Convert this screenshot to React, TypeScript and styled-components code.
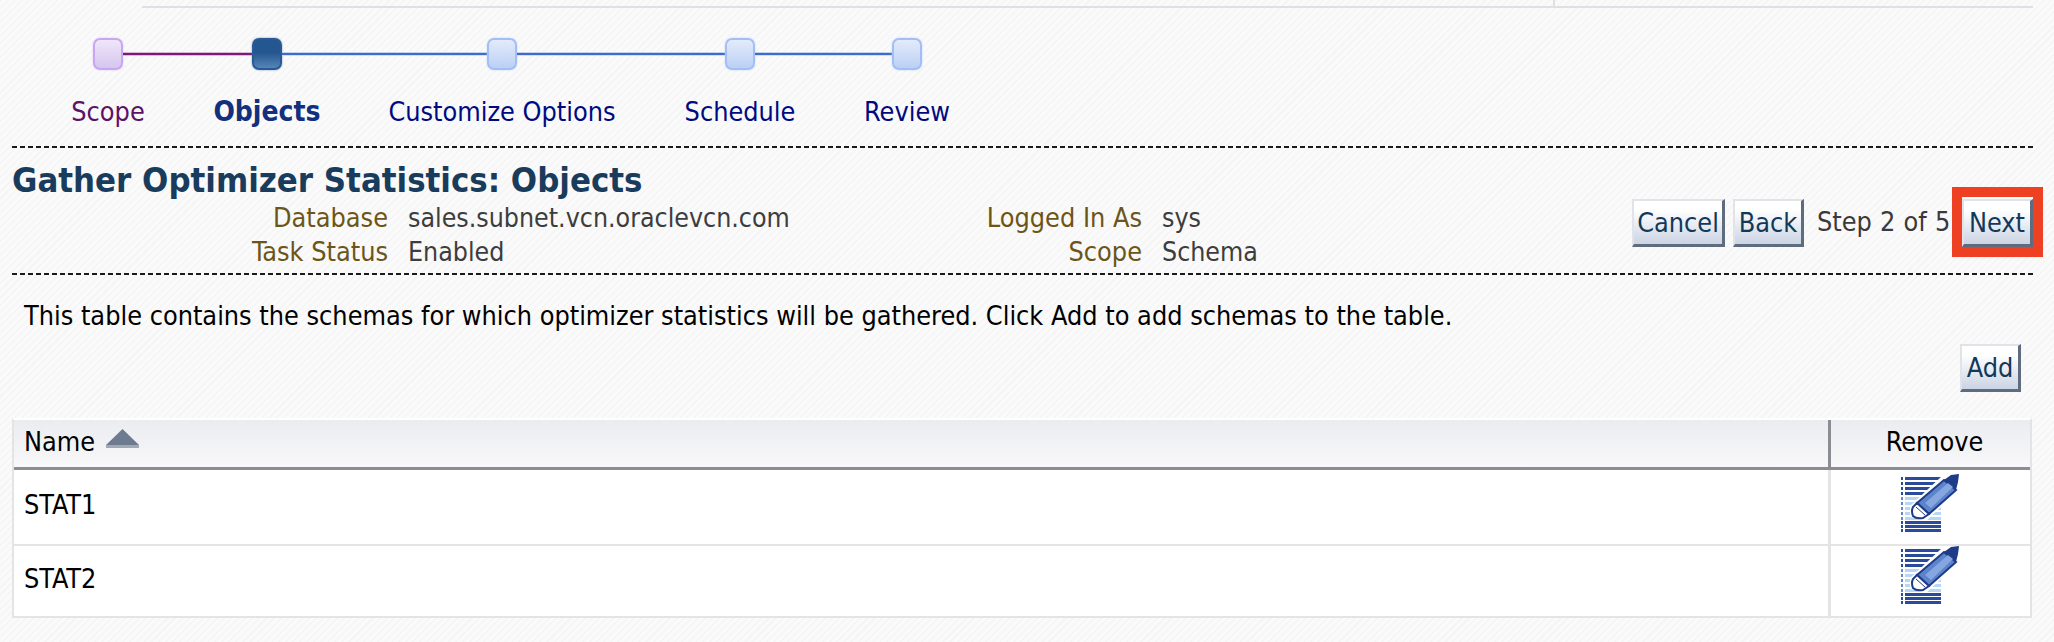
import React from "react";
import styled, { createGlobalStyle } from "styled-components";

const FONT = `"DejaVu Sans Condensed", "DejaVu Sans", sans-serif`;

const Global = createGlobalStyle`
  html, body {
    margin: 0;
    height: 642px;
    overflow: hidden;
    background-color: #f9f9f9;
    background-image: repeating-linear-gradient(
      135deg,
      #f5f5f5 0,
      #f5f5f5 1.5px,
      #fafafa 1.5px,
      #fafafa 5px
    );
  }
  * { box-sizing: border-box; }
`;

const S = {
  Page: styled.div`
    width: 2054px;
    height: 642px;
    padding: 0 21px 0 12px;
    font-family: ${FONT};
    font-size: 26.8px;
  `,
  TopRule: styled.div`
    height: 8px;
    margin-left: 130px;
    border-bottom: 2px solid #dde1e5;
  `,
  TopTick: styled.div`
    width: 2px;
    height: 6px;
    margin-left: 1411px;
    background: #dde1e5;
  `,
  Track: styled.div`
    display: flex;
    align-items: center;
    height: 32px;
    margin: 30px 0 0 81px;
  `,
  Node: styled.div<{ $state: string }>`
    width: 30px;
    height: 32px;
    border-radius: 7px;
    border: 2px solid
      ${(p) =>
        p.$state === "done" ? "#c9a6f2" : p.$state === "active" ? "#2a5a94" : "#a3bdf5"};
    box-shadow: 0 0 2px
      ${(p) =>
        p.$state === "done" ? "#d9c2f5" : p.$state === "active" ? "#6f8fb5" : "#bcd0f7"};
    background: ${(p) =>
      p.$state === "done"
        ? "linear-gradient(#efe6fa, #d5c6ee)"
        : p.$state === "active"
          ? "linear-gradient(#24578f 45%, #5585b8)"
          : "linear-gradient(#e3ebfb, #bcd0f4)"};
  `,
  Line: styled.div<{ $done: boolean; $w: number }>`
    width: ${(p) => p.$w}px;
    height: 4px;
    border-top: 1px solid ${(p) => (p.$done ? "#d9b8d6" : "#c4d2f0")};
    border-bottom: 1px solid ${(p) => (p.$done ? "#c8c4e4" : "#d3def5")};
    background: ${(p) => (p.$done ? "#7c1a78" : "#3f6ccb")};
  `,
  Labels: styled.div`
    display: grid;
    grid-template-columns: 120px 198px 272px 204px 130px;
    margin: 26px 0 18px 36px;
  `,
  StepLabel: styled.div<{ $state: string }>`
    height: 32px;
    line-height: 32px;
    text-align: center;
    font-size: ${(p) => (p.$state === "active" ? 28 : 26.8)}px;
    font-weight: ${(p) => (p.$state === "active" ? 700 : 400)};
    color: ${(p) =>
      p.$state === "done" ? "#5b1268" : p.$state === "active" ? "#12307e" : "#000a80"};
  `,
  Dashed: styled.div`
    height: 2px;
    background-image: repeating-linear-gradient(90deg, #1a1a1a 0 5px, transparent 5px 8px);
  `,
  Header: styled.div`
    display: flex;
    justify-content: space-between;
    height: 125px;
  `,
  Title: styled.h1`
    margin: 14px 0 3px;
    font-size: 34.4px;
    line-height: 36px;
    font-weight: 700;
    color: #1a3c5c;
  `,
  Info: styled.div`
    display: grid;
    grid-template-columns: 376px 300px 414px auto;
    column-gap: 20px;
    grid-auto-rows: 34px;
    line-height: 33px;
  `,
  InfoLabel: styled.div`
    text-align: right;
    white-space: nowrap;
    color: #6c5518;
  `,
  InfoValue: styled.div`
    font-size: 26.5px;
    white-space: nowrap;
    color: #3d3d3d;
  `,
  Actions: styled.div`
    display: flex;
    align-items: flex-start;
    padding-top: 51px;
  `,
  Button: styled.button<{ $w: number; $mr?: number }>`
    width: ${(p) => p.$w}px;
    height: 48px;
    padding: 0;
    margin-right: ${(p) => p.$mr || 0}px;
    font-family: ${FONT};
    font-size: 26.8px;
    color: #12385a;
    border-style: solid;
    border-width: 2px 3px 3px 2px;
    border-color: #e2e3e9 #5f6b7e #5f6b7e #e2e3e9;
    background: linear-gradient(#ffffff 20%, #cbd4e4);
  `,
  StepText: styled.span`
    width: 133px;
    line-height: 46px;
    margin: 0 12px 0 13px;
    color: #3a3a3a;
    word-spacing: 0.5px;
    white-space: nowrap;
  `,
  Callout: styled.div`
    display: flex;
    outline: 10px solid #ee4023;
    margin-top: -2px;
    padding-top: 2px;
    background: #fff;
  `,
  Intro: styled.p`
    margin: 0;
    padding: 25px 12px 0;
    height: 68px;
    line-height: 32px;
    color: #000;
  `,
  AddRow: styled.div`
    display: flex;
    justify-content: flex-end;
    padding: 1px 12px 0 0;
    height: 75px;
  `,
  Table: styled.div`
    width: 2020px;
    background: #fff;
    border: 2px solid #e4e4e4;
    border-top-color: #fff;
    color: #000;
  `,
  HeadRow: styled.div`
    display: grid;
    grid-template-columns: 1fr 202px;
    height: 50px;
    line-height: 44px;
    border-bottom: 3px solid #8c8c94;
    background: linear-gradient(#ebecf0, #f8f8fa);
  `,
  NameHead: styled.div`
    display: flex;
    align-items: center;
    gap: 11px;
    padding: 0 0 3px 10px;
    svg {
      margin-bottom: 6px;
    }
  `,
  RemoveHead: styled.div`
    padding-left: 8px;
    text-align: center;
    border-left: 3px solid #8c8c94;
  `,
  Row: styled.div`
    display: grid;
    grid-template-columns: 1fr 202px;
    height: 74px;
    & + & {
      height: 72px;
      border-top: 2px solid #e4e4e4;
    }
  `,
  NameCell: styled.div<{ $top: number }>`
    padding: ${(p) => p.$top}px 0 0 10px;
    line-height: 32px;
  `,
  RemoveCell: styled.div<{ $top: number }>`
    display: flex;
    justify-content: center;
    padding: ${(p) => p.$top}px 2px 0 0;
    border-left: 3px solid #e4e4e4;
  `,
};

const steps = [
  { name: "Scope", state: "done", line: 129 },
  { name: "Objects", state: "active", line: 205 },
  { name: "Customize Options", state: "todo", line: 208 },
  { name: "Schedule", state: "todo", line: 137 },
  { name: "Review", state: "todo", line: 0 },
];

const rows = [
  { name: "STAT1", nameTop: 19, iconTop: 4 },
  { name: "STAT2", nameTop: 17, iconTop: 0 },
];

const SortUp = () => (
  <svg width="33" height="20" viewBox="0 0 33 20">
    <path d="M16.5 0 L33 16 H0 Z" fill="#6d7a90" />
    <rect x="0" y="16" width="33" height="3" fill="#a2a8b4" />
  </svg>
);

const RemoveIcon = () => {
  const dark = [3, 8, 13, 18, 47, 51, 55];
  const light = [23, 28, 33, 38, 43];
  return (
    <svg width="58" height="58" viewBox="0 0 58 58">
      {dark.map((y) => (
        <g key={y}>
          <rect x="0" y={y} width="2" height="3" fill="#2a4a9c" />
          <rect x="4" y={y} width="36" height="3" fill="#2a4a9c" />
        </g>
      ))}
      {light.map((y) => (
        <g key={y}>
          <rect x="0" y={y} width="2" height="3" fill="#6a86c8" />
          <rect x="4" y={y} width="36" height="3" fill="#b8d6f6" />
        </g>
      ))}
      <path d="M58 0 L57 17 L25 47 L9 43 L9 32 L41 2 Z" fill="#ffffff" />
      <path d="M43 6 L55 16 L28 40 L16 29 Z" fill="#5b84cc" stroke="#1f3a86" strokeWidth="2" />
      <path d="M43 6 L50 1 L58 0 L57 8 L55 16 Z" fill="#1f3a86" />
      <path d="M47 9 L52 13 L30 34 L24 29 Z" fill="#86a6e0" />
      <path
        d="M16 29 L28 40 L22 44 Q15 45 12 42 Q10 37 12 33 Z"
        fill="#fff"
        stroke="#1f3a86"
        strokeWidth="2"
      />
      <path d="M15 33 L24 41" stroke="#1f3a86" strokeWidth="1" fill="none" />
    </svg>
  );
};

const App = () => (
  <S.Page>
    <Global />
    <S.TopRule>
      <S.TopTick />
    </S.TopRule>
    <S.Track>
      {steps.map((s) => (
        <React.Fragment key={s.name}>
          <S.Node $state={s.state} />
          {s.line > 0 && <S.Line $done={s.state === "done"} $w={s.line} />}
        </React.Fragment>
      ))}
    </S.Track>
    <S.Labels>
      {steps.map((s) => (
        <S.StepLabel key={s.name} $state={s.state}>
          {s.name}
        </S.StepLabel>
      ))}
    </S.Labels>
    <S.Dashed />
    <S.Header>
      <div>
        <S.Title>Gather Optimizer Statistics: Objects</S.Title>
        <S.Info>
          <S.InfoLabel>Database</S.InfoLabel>
          <S.InfoValue>sales.subnet.vcn.oraclevcn.com</S.InfoValue>
          <S.InfoLabel>Logged In As</S.InfoLabel>
          <S.InfoValue>sys</S.InfoValue>
          <S.InfoLabel>Task Status</S.InfoLabel>
          <S.InfoValue>Enabled</S.InfoValue>
          <S.InfoLabel>Scope</S.InfoLabel>
          <S.InfoValue>Schema</S.InfoValue>
        </S.Info>
      </div>
      <S.Actions>
        <S.Button $w={93} $mr={8}>
          Cancel
        </S.Button>
        <S.Button $w={71}>Back</S.Button>
        <S.StepText>Step 2 of 5</S.StepText>
        <S.Callout>
          <S.Button $w={71}>Next</S.Button>
        </S.Callout>
      </S.Actions>
    </S.Header>
    <S.Dashed />
    <S.Intro>
      This table contains the schemas for which optimizer statistics will be gathered. Click Add to
      add schemas to the table.
    </S.Intro>
    <S.AddRow>
      <S.Button $w={61}>Add</S.Button>
    </S.AddRow>
    <S.Table>
      <S.HeadRow>
        <S.NameHead>
          Name <SortUp />
        </S.NameHead>
        <S.RemoveHead>Remove</S.RemoveHead>
      </S.HeadRow>
      {rows.map((r) => (
        <S.Row key={r.name}>
          <S.NameCell $top={r.nameTop}>{r.name}</S.NameCell>
          <S.RemoveCell $top={r.iconTop}>
            <RemoveIcon />
          </S.RemoveCell>
        </S.Row>
      ))}
    </S.Table>
  </S.Page>
);

export default App;
